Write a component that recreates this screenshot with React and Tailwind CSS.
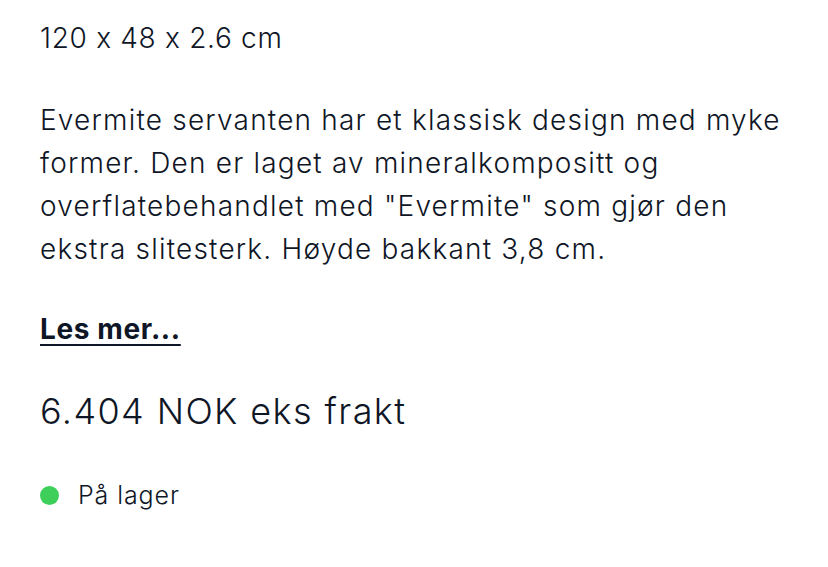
import React from 'react';

const App = () => {
  return (
    <div
      className="min-h-[567px] w-[828px] bg-white pl-10 pt-[17px] text-[#0f1626]"
      style={{ fontFamily: 'Inter, "Noto Sans", sans-serif', fontFeatureSettings: '"calt" 0' }}
    >
      <p className="text-[28px] font-light leading-[42px] tracking-[0.7px]">120 x 48 x 2.6 cm</p>

      <p className="mt-[40px] w-[772px] text-[28px] font-light leading-[43px] tracking-[1.2px]">
        Evermite servanten har et klassisk design med myke former. Den er laget av mineralkompositt og
        overflatebehandlet med "Evermite" som gjør den ekstra slitesterk. Høyde bakkant 3,8 cm.
      </p>

      <a href="#" className="mt-[40px] inline-block text-[28px] font-bold leading-[36px] tracking-[0.6px] underline underline-offset-[5px]">
        Les mer...
      </a>

      <p className="mt-[40px] text-[36px] font-light leading-[48px] tracking-[1.4px]">6.404 NOK eks frakt</p>

      <div className="mt-[44px] flex items-center gap-[19px]">
        <span className="h-[19px] w-[19px] rounded-full bg-[#3ecf5a]" />
        <span className="text-[25px] font-light leading-[32px] tracking-[0.9px]">På lager</span>
      </div>
    </div>
  );
};

export default App;
